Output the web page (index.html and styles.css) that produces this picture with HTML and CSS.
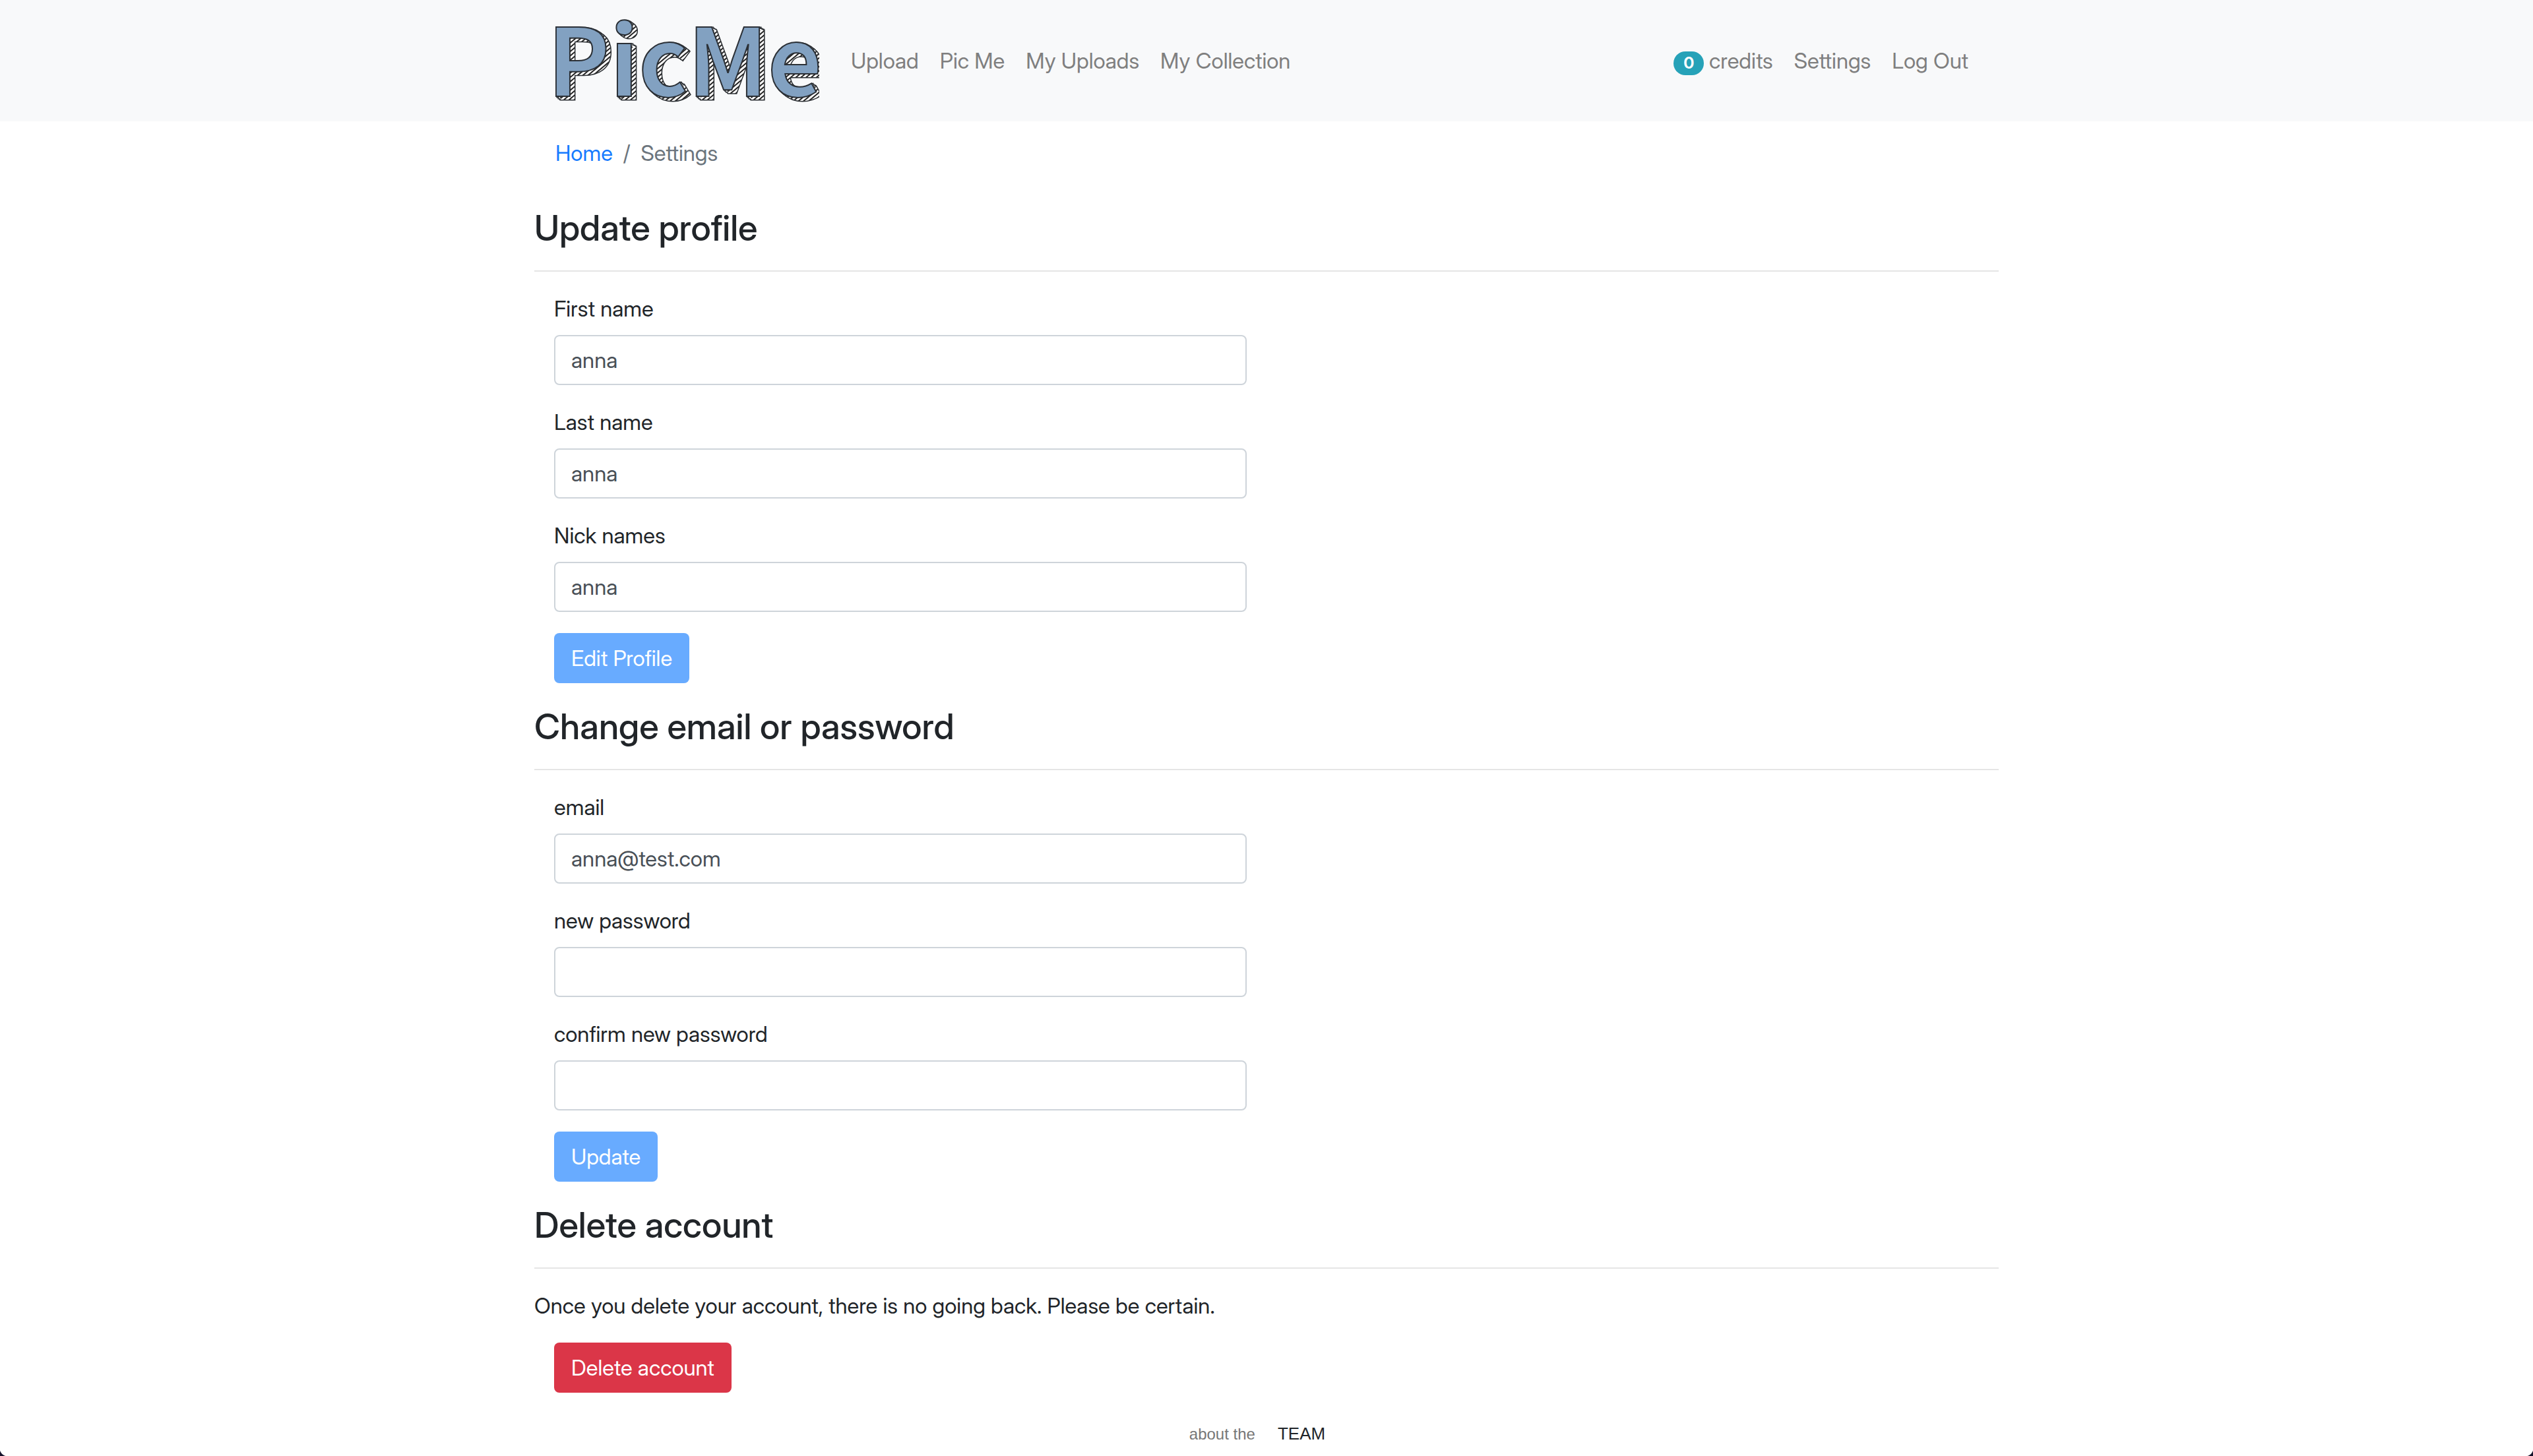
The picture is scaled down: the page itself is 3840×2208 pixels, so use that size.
FILE: index.html
```html
<!DOCTYPE html>
<html lang="en">
<head>
<meta charset="utf-8">
<meta name="viewport" content="width=device-width, initial-scale=1">
<title>PicMe - Settings</title>
<link rel="stylesheet" href="styles.css">
</head>
<body>
<header class="navbar">
  <nav class="navbar-inner">
    <a class="brand" href="#" aria-label="PicMe">
      <svg class="logo" viewBox="0 0 400 132" aria-hidden="true">
        <defs>
          <pattern id="hatch" width="5" height="5" patternUnits="userSpaceOnUse" patternTransform="rotate(-40)">
            <rect class="hatch-paper" width="5" height="5"/>
            <rect class="hatch-line" width="5" height="2"/>
          </pattern>
          <text id="word" class="logo-word" x="-12" y="120">PicMe</text>
        </defs>
        <g class="logo-edge">
          <use href="#word" x="2" y="1"/><use href="#word" x="4" y="3"/><use href="#word" x="6" y="4"/><use href="#word" x="7" y="5"/>
        </g>
        <g class="logo-side">
          <use href="#word" x="2" y="1"/><use href="#word" x="4" y="3"/><use href="#word" x="6" y="4"/><use href="#word" x="7" y="5"/>
        </g>
        <use class="logo-face" href="#word"/>
      </svg>
    </a>
    <ul class="nav">
      <li><a class="nav-link" href="#">Upload</a></li>
      <li><a class="nav-link" href="#">Pic Me</a></li>
      <li><a class="nav-link" href="#">My Uploads</a></li>
      <li><a class="nav-link" href="#">My Collection</a></li>
    </ul>
    <ul class="nav nav-end">
      <li><a class="nav-link credits" href="#"><span class="badge">0</span>credits</a></li>
      <li><a class="nav-link" href="#">Settings</a></li>
      <li><a class="nav-link" href="#">Log Out</a></li>
    </ul>
  </nav>
</header>
<main class="container">
  <ol class="breadcrumb">
    <li><a href="#">Home</a></li>
    <li class="active">Settings</li>
  </ol>
  <section class="section">
    <h3>Update profile</h3>
    <form class="form">
      <div class="field"><label for="first">First name</label><input id="first" type="text" value="anna"></div>
      <div class="field"><label for="last">Last name</label><input id="last" type="text" value="anna"></div>
      <div class="field"><label for="nick">Nick names</label><input id="nick" type="text" value="anna"></div>
      <button class="btn btn-primary" type="submit" disabled>Edit Profile</button>
    </form>
  </section>
  <section class="section">
    <h3>Change email or password</h3>
    <form class="form">
      <div class="field"><label for="email">email</label><input id="email" type="email" value="anna@test.com"></div>
      <div class="field"><label for="pass">new password</label><input id="pass" type="password"></div>
      <div class="field"><label for="confirm">confirm new password</label><input id="confirm" type="password"></div>
      <button class="btn btn-primary" type="submit" disabled>Update</button>
    </form>
  </section>
  <section class="section">
    <h3>Delete account</h3>
    <p>Once you delete your account, there is no going back. Please be certain.</p>
    <form class="form">
      <button class="btn btn-danger" type="button">Delete account</button>
    </form>
  </section>
</main>
<footer class="footer"><span>about the</span><a href="#">TEAM</a></footer>
</body>
</html>
```
FILE: styles.css
```css
* { box-sizing: border-box; }

body {
  margin: 0;
  background: #fff;
  color: #212529;
  font-family: "Inter Display", Inter, "Liberation Sans", sans-serif;
  font-size: 33px;
  line-height: 48px;
}

/* rounded bottom corners of the window */
body::before,
body::after {
  content: "";
  position: fixed;
  bottom: 0;
  width: 12px;
  height: 12px;
}
body::before { left: 0; background: radial-gradient(circle at 100% 0, transparent 12px, #15132b 13px); }
body::after { right: 0; background: radial-gradient(circle at 0 0, transparent 12px, #15132b 13px); }

ul, ol { list-style: none; margin: 0; padding: 0; }
a { text-decoration: none; }

.navbar { background: #f8f9fa; }
.navbar-inner {
  display: flex;
  align-items: center;
  max-width: 2280px;
  min-height: 184px;
  margin: 0 auto;
  padding: 0 60px;
}
.brand { display: flex; margin: 0 32px 0 2px; }
.logo { width: 400px; height: 132px; overflow: hidden; }
.logo-word { font: bold 142px "Noto Sans CJK JP", sans-serif; }
.hatch-paper { fill: #fff; }
.hatch-line { fill: #222; }
.logo-edge { fill: #2b2f33; stroke: #2b2f33; stroke-width: 3; }
.logo-side { fill: url(#hatch); }
.logo-face { fill: #82a1c1; stroke: #2b3036; stroke-width: 2; }

.nav { display: flex; }
.nav-end { margin-left: auto; }
.nav-link { display: block; padding: 16px; color: #7f7f7f; }
.credits { display: flex; align-items: center; gap: 8px; }
.badge {
  margin-top: 8px;
  padding: 6px 15px;
  border-radius: 18px;
  background: #26a2b8;
  color: #fff;
  font-size: 24px;
  font-weight: 700;
  line-height: 24px;
}

.container { max-width: 2280px; margin: 0 auto; padding: 0 30px; }
.breadcrumb { display: flex; margin-bottom: 32px; padding: 24px 32px; }
.breadcrumb a { color: #177bff; }
.active { color: #6c757d; }
.active::before { content: "/"; padding: 0 16px; }

.section { padding-bottom: 32px; }
h3 {
  margin: 0 0 32px;
  padding-bottom: 31px;
  border-bottom: 2px solid #e5e5e5;
  font-size: 54px;
  font-weight: 500;
  line-height: 67px;
}
p { margin: 0 0 32px; }
.form { width: 50%; padding: 0 30px; }
.field { margin-bottom: 32px; }
label { display: block; margin-bottom: 16px; }
input {
  display: block;
  width: 100%;
  height: 76px;
  padding: 12px 24px;
  border: 2px solid #ced4da;
  border-radius: 8px;
  background: #fff;
  color: #495057;
  font: inherit;
}
.btn {
  display: block;
  height: 76px;
  padding: 0 26px;
  border: 0;
  border-radius: 8px;
  color: #fff;
  font: inherit;
}
.btn-primary { background: #68abff; }
.btn-danger { background: #db3648; }

.footer {
  display: flex;
  justify-content: center;
  align-items: baseline;
  gap: 34px;
  padding: 6px 28px 8px 0;
  font-family: "Liberation Sans", Arial, sans-serif;
  font-size: 24px;
  color: #777;
}
.footer a { color: #212529; font-size: 26px; }
```
